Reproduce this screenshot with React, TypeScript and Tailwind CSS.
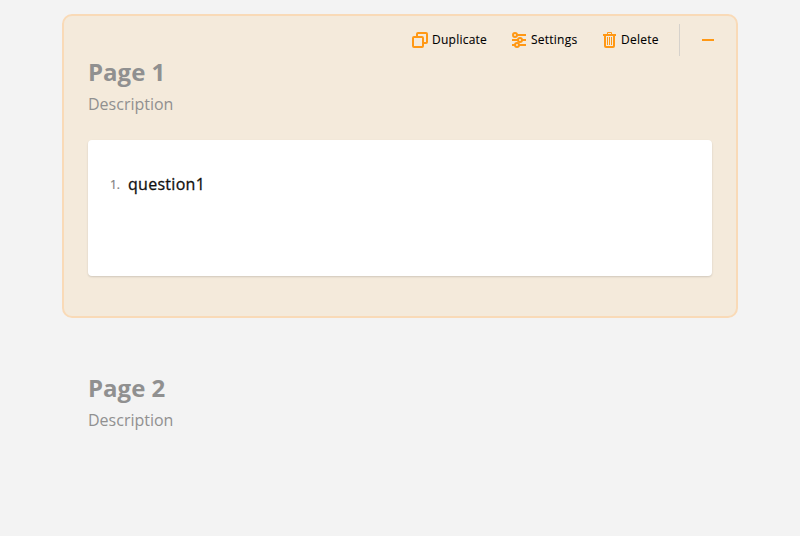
import React from "react";

function DuplicateIcon() {
  return (
    <svg className="shrink-0" width="16" height="16" viewBox="0 0 16 16" fill="none" stroke="#ff9814" strokeWidth="2">
      <rect x="1" y="5" width="10" height="10" rx="1" />
      <path d="M5 5V2a1 1 0 0 1 1-1h8a1 1 0 0 1 1 1v8a1 1 0 0 1-1 1h-3" />
    </svg>
  );
}

function SettingsIcon() {
  return (
    <svg className="shrink-0" width="16" height="16" viewBox="0 0 16 16" fill="none" stroke="#ff9814" strokeWidth="2">
      <circle cx="4" cy="3" r="2" />
      <path d="M6 3h9M1 8h6M11 8h4M1 13h3M8 13h7" />
      <circle cx="9" cy="8" r="2" />
      <circle cx="6" cy="13" r="2" />
    </svg>
  );
}

function DeleteIcon() {
  return (
    <svg className="shrink-0" width="16" height="16" viewBox="0 0 16 16" fill="none" stroke="#ff9814">
      <path d="M6.5 2V.5h4V2" />
      <path d="M2 3h13" strokeWidth="2" />
      <path d="M4 3v11a1 1 0 0 0 1 1h7a1 1 0 0 0 1-1V3" strokeWidth="2" />
      <path d="M6.5 5v8M8.5 5v8M10.5 5v8" />
    </svg>
  );
}

function Action({ icon, label, width }: { icon: React.ReactNode; label: string; width: string }) {
  return (
    <button className="flex h-8 items-center gap-1 text-left text-[12px] leading-4 tracking-[0.24px] text-black [-webkit-text-stroke:0.1px_black]">
      {icon}
      <span className={`${width} whitespace-nowrap`}>{label}</span>
    </button>
  );
}

function PageHeading({ title }: { title: string }) {
  return (
    <div className="text-[#909090]">
      <h2 className="text-[24px] font-bold leading-8">{title}</h2>
      <p className="mt-1 text-[16px] leading-6">Description</p>
    </div>
  );
}

export default function App() {
  return (
    <main className="h-[536px] overflow-hidden bg-[#f3f3f3] px-[62px] pt-[14px] font-['Open_Sans',sans-serif]">
      <section className="h-[304px] rounded-[10px] border-2 border-[#f9dab7] bg-[#f4eadb] px-6 pt-2">
        <div className="flex h-8 items-center justify-end">
          <div className="flex gap-6 pr-5">
            <Action icon={<DuplicateIcon />} label="Duplicate" width="w-[55px]" />
            <Action icon={<SettingsIcon />} label="Settings" width="w-[46px]" />
            <Action icon={<DeleteIcon />} label="Delete" width="w-[38px]" />
          </div>
          <div className="flex h-8 w-[33px] items-center border-l border-[#d6d2cc] pl-[22px]">
            <div className="-mr-1 h-0.5 w-3 shrink-0 bg-[#ff9814]" />
          </div>
        </div>
        <PageHeading title="Page 1" />
        <div className="mt-6 flex h-[136px] items-start gap-2 rounded-[4px] bg-white pl-[22px] pt-8 shadow-[0_1px_2px_rgba(0,0,0,0.15)]">
          <span className="w-[10px] pt-px text-[12px] leading-6 text-[#808080] [-webkit-text-stroke:0.2px_#808080]">1.</span>
          <span className="text-[16px] leading-6 tracking-[0.28px] text-[#101010] [-webkit-text-stroke:0.3px_#101010]">question1</span>
        </div>
      </section>
      <section className="px-[26px] pt-[54px]">
        <PageHeading title="Page 2" />
      </section>
    </main>
  );
}
